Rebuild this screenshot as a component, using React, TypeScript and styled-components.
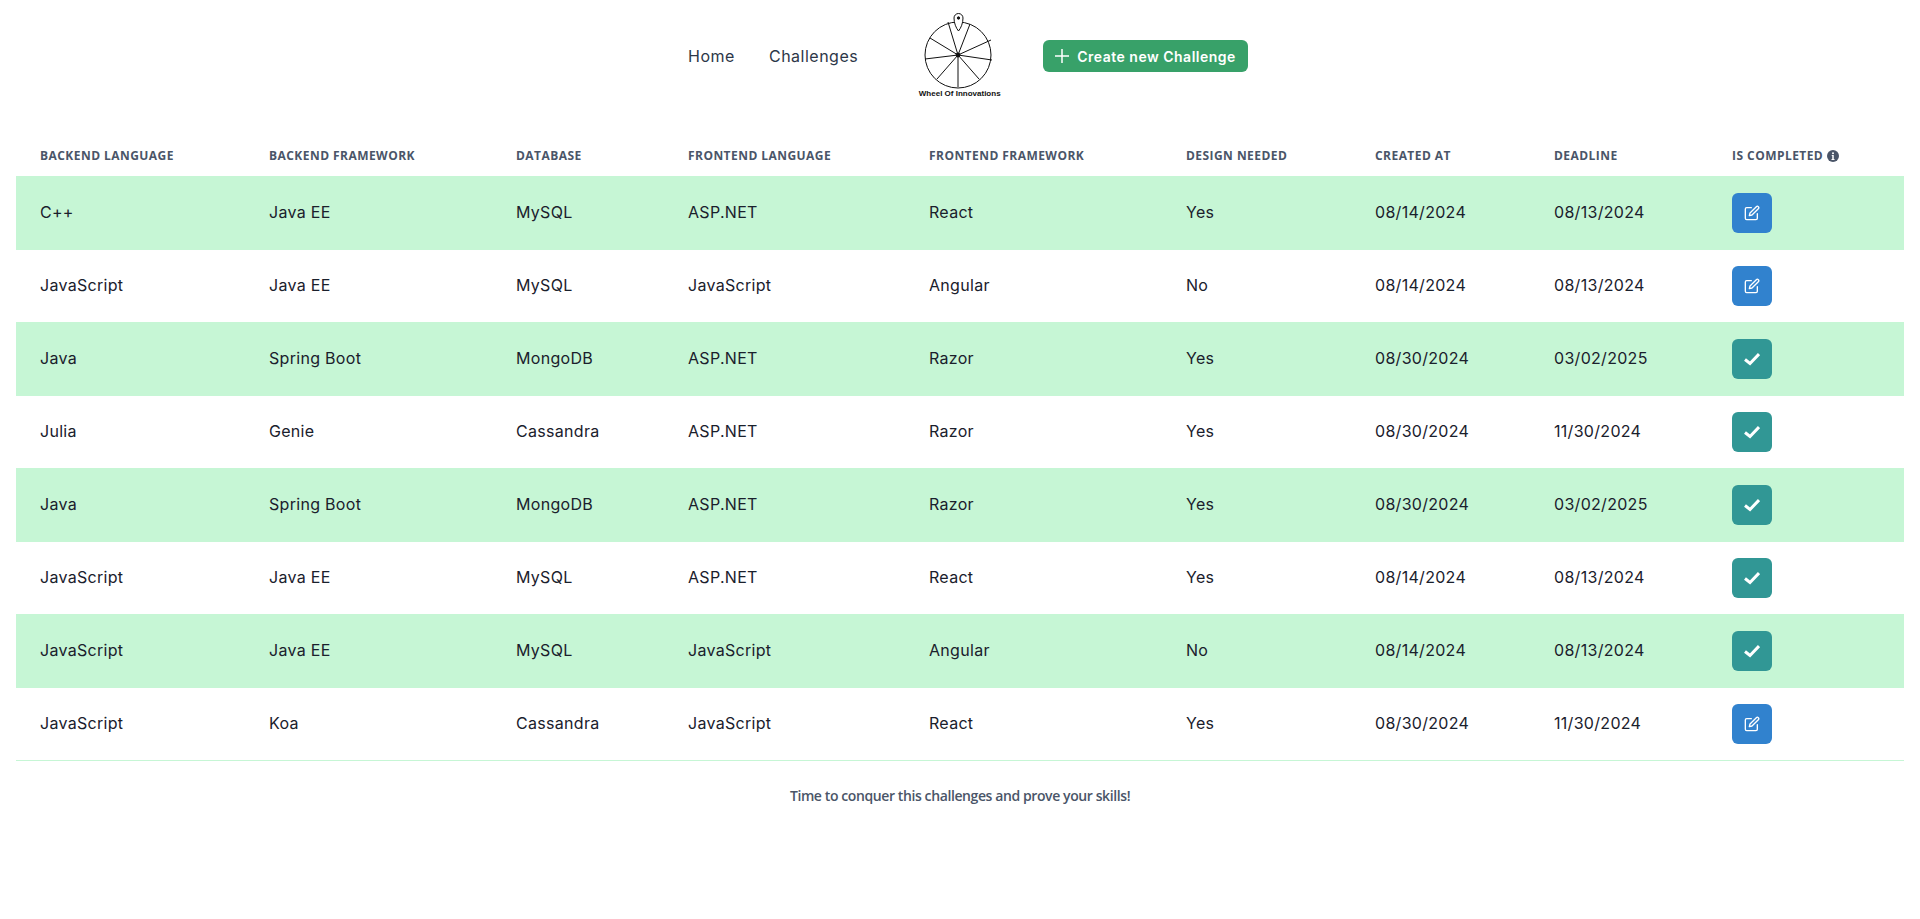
import styled, { createGlobalStyle } from "styled-components";

const GlobalStyle = createGlobalStyle`
  body {
    margin: 0;
    background: #fff;
    color: #1a202c;
    font-family: "Inter", "Liberation Sans", sans-serif;
  }
`;

type Challenge = {
  backendLanguage: string;
  backendFramework: string;
  database: string;
  frontendLanguage: string;
  frontendFramework: string;
  design: string;
  createdAt: string;
  deadline: string;
  completed: boolean;
};

const columns = [
  { title: "Backend Language", width: 229 },
  { title: "Backend Framework", width: 247 },
  { title: "Database", width: 172 },
  { title: "Frontend Language", width: 241 },
  { title: "Frontend Framework", width: 257 },
  { title: "Design Needed", width: 189 },
  { title: "Created At", width: 179 },
  { title: "Deadline", width: 178 },
  { title: "Is Completed", width: 196 },
];

const challenges: Challenge[] = [
  { backendLanguage: "C++", backendFramework: "Java EE", database: "MySQL", frontendLanguage: "ASP.NET", frontendFramework: "React", design: "Yes", createdAt: "08/14/2024", deadline: "08/13/2024", completed: false },
  { backendLanguage: "JavaScript", backendFramework: "Java EE", database: "MySQL", frontendLanguage: "JavaScript", frontendFramework: "Angular", design: "No", createdAt: "08/14/2024", deadline: "08/13/2024", completed: false },
  { backendLanguage: "Java", backendFramework: "Spring Boot", database: "MongoDB", frontendLanguage: "ASP.NET", frontendFramework: "Razor", design: "Yes", createdAt: "08/30/2024", deadline: "03/02/2025", completed: true },
  { backendLanguage: "Julia", backendFramework: "Genie", database: "Cassandra", frontendLanguage: "ASP.NET", frontendFramework: "Razor", design: "Yes", createdAt: "08/30/2024", deadline: "11/30/2024", completed: true },
  { backendLanguage: "Java", backendFramework: "Spring Boot", database: "MongoDB", frontendLanguage: "ASP.NET", frontendFramework: "Razor", design: "Yes", createdAt: "08/30/2024", deadline: "03/02/2025", completed: true },
  { backendLanguage: "JavaScript", backendFramework: "Java EE", database: "MySQL", frontendLanguage: "ASP.NET", frontendFramework: "React", design: "Yes", createdAt: "08/14/2024", deadline: "08/13/2024", completed: true },
  { backendLanguage: "JavaScript", backendFramework: "Java EE", database: "MySQL", frontendLanguage: "JavaScript", frontendFramework: "Angular", design: "No", createdAt: "08/14/2024", deadline: "08/13/2024", completed: true },
  { backendLanguage: "JavaScript", backendFramework: "Koa", database: "Cassandra", frontendLanguage: "JavaScript", frontendFramework: "React", design: "Yes", createdAt: "08/30/2024", deadline: "11/30/2024", completed: false },
];

const spokes = [
  [48, 17], [70, 19], [91, 35], [92, 55], [79, 74], [58, 82], [37, 74], [25, 54], [30, 33],
];

function Logo() {
  return (
    <LogoBox>
      <svg width="116" height="84" viewBox="0 0 116 84" fill="none" stroke="#111" strokeWidth="1">
        <circle cx="58" cy="50" r="33" />
        {spokes.map(([x, y]) => (
          <line key={`${x}-${y}`} x1="58" y1="50" x2={x} y2={y} />
        ))}
        <circle cx="58" cy="50" r="2" fill="#111" />
        <path d="M54 13a4.500 4.500 0 0 1 9 0c0 5-2 10-4.500 13c-2.500-3-4.500-8-4.500-13z" fill="#fff" />
        <circle cx="58.500" cy="13" r="1.200" fill="#111" />
      </svg>
      <LogoText>Wheel Of Innovations</LogoText>
    </LogoBox>
  );
}

function EditIcon() {
  return (
    <svg width="16" height="16" viewBox="0 0 24 24" fill="none" stroke="#fff" strokeWidth="2" strokeLinecap="round" strokeLinejoin="round">
      <path d="M11 4H4a2 2 0 0 0-2 2v14a2 2 0 0 0 2 2h14a2 2 0 0 0 2-2v-7" />
      <path d="M18.500 2.500a2.121 2.121 0 0 1 3 3L12 15l-4 1 1-4 9.500-9.500z" />
    </svg>
  );
}

function CheckIcon() {
  return (
    <svg width="16" height="16" viewBox="0 0 16 16" fill="none" stroke="#fff" strokeWidth="3">
      <path d="M1 8.500 L6 12.500 L15 3" />
    </svg>
  );
}

function InfoIcon() {
  return (
    <InfoMark viewBox="0 0 24 24">
      <path fill="#4a5568" d="M12 0a12 12 0 1 0 12 12A12 12 0 0 0 12 0Z" />
      <circle fill="#fff" cx="12" cy="6.500" r="2" />
      <path fill="#fff" d="M9.500 10h4v8h1.500v2h-6v-2h1.500v-6h-1z" />
    </InfoMark>
  );
}

export default function App() {
  return (
    <Page>
      <GlobalStyle />
      <Nav>
        <NavLink $gap={34}>Home</NavLink>
        <NavLink $gap={32}>Challenges</NavLink>
        <Logo />
        <CreateButton>
          <svg width="14" height="14" viewBox="0 0 14 14" fill="none" stroke="#fff" strokeWidth="1.500">
            <path d="M7 0v14M0 7h14" />
          </svg>
          Create new Challenge
        </CreateButton>
      </Nav>
      <Table>
        <caption>Time to conquer this challenges and prove your skills!</caption>
        <colgroup>
          {columns.map((c) => (
            <Col key={c.title} $width={c.width} />
          ))}
        </colgroup>
        <thead>
          <tr>
            {columns.map((c) => (
              <Th key={c.title}>
                {c.title}
                {c.title === "Is Completed" && <InfoIcon />}
              </Th>
            ))}
          </tr>
        </thead>
        <tbody>
          {challenges.map((c, i) => (
            <Row key={i} $striped={i % 2 === 0}>
              <Td>{c.backendLanguage}</Td>
              <Td>{c.backendFramework}</Td>
              <Td>{c.database}</Td>
              <Td>{c.frontendLanguage}</Td>
              <Td>{c.frontendFramework}</Td>
              <Td>{c.design}</Td>
              <Td>{c.createdAt}</Td>
              <Td>{c.deadline}</Td>
              <ActionTd>
                <StatusButton $done={c.completed}>
                  {c.completed ? <CheckIcon /> : <EditIcon />}
                </StatusButton>
              </ActionTd>
            </Row>
          ))}
        </tbody>
      </Table>
    </Page>
  );
}

const Page = styled.div`
  padding: 0 16px;
  min-height: 919px;
  box-sizing: border-box;
`;

const Nav = styled.nav`
  height: 136px;
  display: flex;
  align-items: center;
  justify-content: center;
  padding: 0 0 24px 16px;
  box-sizing: border-box;
`;

const NavLink = styled.a<{ $gap: number }>`
  font-size: 16px;
  letter-spacing: 0.5px;
  color: #2d3748;
  margin-right: ${(p) => p.$gap}px;
`;

const LogoBox = styled.div`
  width: 116px;
  height: 100px;
  margin: 0 27px 3px 10px;
  display: flex;
  flex-direction: column;
  align-items: center;
`;

const LogoText = styled.span`
  padding-left: 3px;
  font-family: "Liberation Sans", sans-serif;
  font-size: 8px;
  line-height: 10px;
  font-weight: 700;
  color: #111;
  white-space: nowrap;
`;

const CreateButton = styled.button`
  height: 32px;
  padding: 0 12px;
  display: flex;
  align-items: center;
  gap: 8px;
  border: 0;
  border-radius: 6px;
  background: #38a169;
  color: #fff;
  font-family: "Inter", sans-serif;
  font-size: 14px;
  font-weight: 600;
  letter-spacing: 0.5px;
`;

const Table = styled.table`
  width: 100%;
  table-layout: fixed;
  border-collapse: collapse;

  caption {
    caption-side: bottom;
    margin-top: 16px;
    padding: 9px 24px 8px;
    font-family: "Open Sans", sans-serif;
    font-size: 14px;
    font-weight: 600;
    line-height: 20px;
    letter-spacing: -0.4px;
    color: #4a5568;
  }
`;

const Col = styled.col<{ $width: number }>`
  width: ${(p) => p.$width}px;
`;

const Th = styled.th`
  padding: 12px 24px;
  height: 16px;
  text-align: left;
  font-family: "Open Sans", sans-serif;
  font-size: 12px;
  font-weight: 700;
  line-height: 16px;
  letter-spacing: 0.45px;
  text-transform: uppercase;
  color: #4a5568;
  white-space: nowrap;
  border-bottom: 1px solid #c6f6d5;
`;

const InfoMark = styled.svg`
  width: 12px;
  height: 12px;
  margin-left: 4px;
  vertical-align: -1.500px;
`;

const Row = styled.tr<{ $striped: boolean }>`
  background: ${(p) => (p.$striped ? "#c6f6d5" : "#fff")};
  border-bottom: 1px solid #c6f6d5;
`;

const Td = styled.td`
  padding: 16px 24px 18px;
  font-size: 16px;
  line-height: 24px;
  letter-spacing: 0.3px;
  color: #1a202c;
  white-space: nowrap;
`;

const ActionTd = styled.td`
  padding: 16px 24px;
`;

const StatusButton = styled.button<{ $done: boolean }>`
  width: 40px;
  height: 40px;
  display: flex;
  align-items: center;
  justify-content: center;
  padding: 0;
  border: 0;
  border-radius: 6px;
  background: ${(p) => (p.$done ? "#319795" : "#3182ce")};
`;
